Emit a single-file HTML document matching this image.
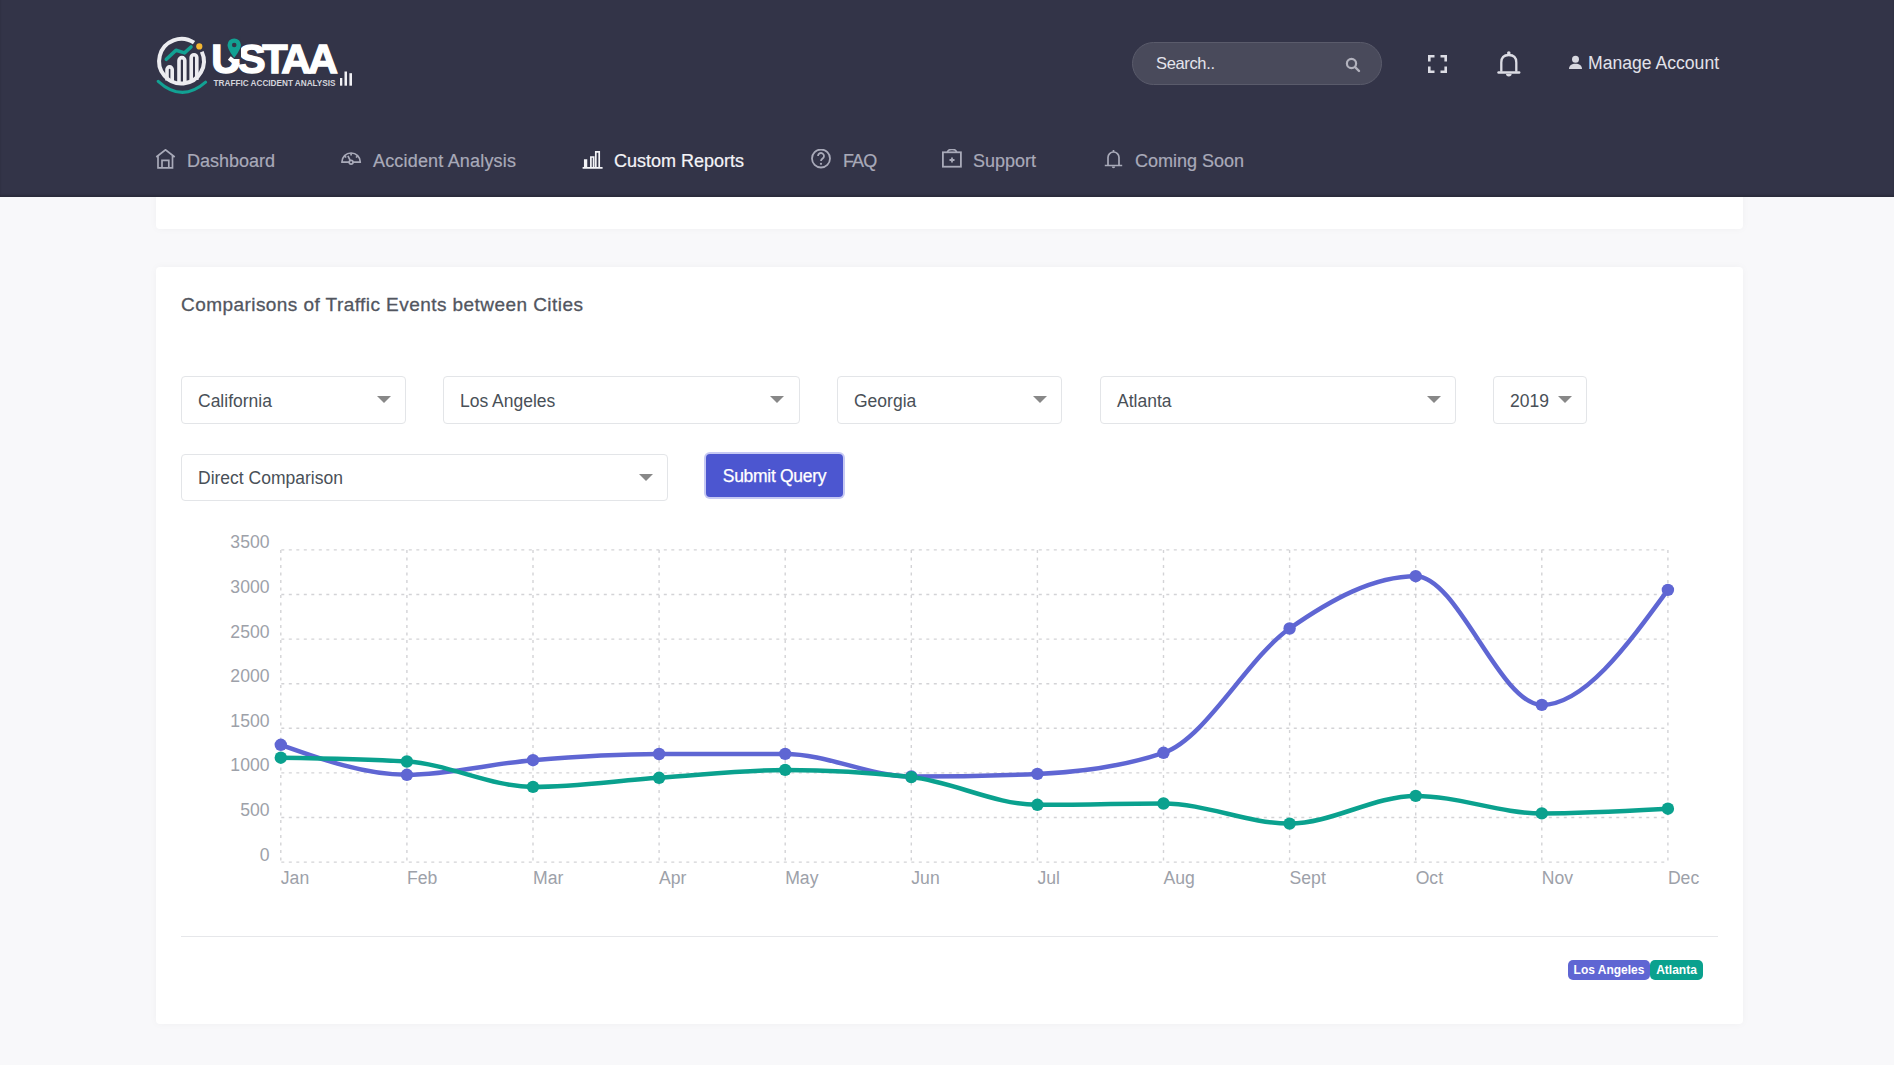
<!DOCTYPE html>
<html><head><meta charset="utf-8">
<style>
*{box-sizing:border-box}
html,body{margin:0;padding:0}
body{width:1894px;height:1065px;overflow:hidden;background:#f8f8fa;font-family:"Liberation Sans",sans-serif;position:relative}
.abs{position:absolute}
#header{position:absolute;left:0;top:0;width:1894px;height:197px;background:#333448;box-shadow:inset 0 -2px 2px rgba(0,0,0,.18);z-index:2}
.search{position:absolute;left:1132px;top:42px;width:250px;height:43px;border-radius:22px;background:#494a5b;border:1px solid #5a5b6b}
.search span{position:absolute;left:23px;top:11px;font-size:16.5px;letter-spacing:-0.35px;color:#e4e4ec;line-height:18px}
.nav{position:absolute;top:149px;height:22px;font-size:18px;line-height:22px;color:#a9aab9;white-space:nowrap}
.nav svg{position:absolute;top:0}
.nav span{position:absolute;top:1px;-webkit-text-stroke:0.2px currentColor}
.card{position:absolute;left:156px;width:1587px;background:#fff;border-radius:4px;box-shadow:0 0 8px rgba(30,30,60,.035)}
.sel{position:absolute;height:48px;border:1px solid #e3e5e8;border-radius:4px;background:#fff}
.sel span{position:absolute;left:16px;top:14px;font-size:17.5px;line-height:20px;color:#495057}
.sel i{position:absolute;top:19px;width:0;height:0;border-left:7px solid transparent;border-right:7px solid transparent;border-top:7px solid #888}
</style></head>
<body>
<div id="header">
  <!-- logo -->
  <svg id="logo" class="abs" style="left:150px;top:30px" width="210" height="70" viewBox="150 30 210 70">
    <path d="M201.80 51.73 A22.4 22.4 0 1 1 194.03 42.63" fill="none" stroke="#ececf0" stroke-width="4"/>
    <circle cx="199.3" cy="46.4" r="3.1" fill="#f5b731"/>
    <path d="M167 80.5 V69.5 a2.6 2.6 0 0 1 5.2 0 V81.5 M179 82 V60.5 a2.9 2.9 0 0 1 5.8 0 V82 M191.2 81.5 V57.5 a2.8 2.8 0 0 1 5.6 0 V80" fill="none" stroke="#ececf0" stroke-width="3.6"/>
    <path d="M166.3 59.3 L176 50.2 L184.5 52.9 L191 47" fill="none" stroke="#12a193" stroke-width="3.6" stroke-linecap="round" stroke-linejoin="round"/>
    <path d="M158.2 81.3 Q182 103 205.6 82.2" fill="none" stroke="#12a193" stroke-width="3" stroke-linecap="round"/>
    <text x="211.3" y="72.6" font-family="Liberation Sans" font-weight="bold" font-size="41.5" fill="#fff" stroke="#fff" stroke-width="1.4" letter-spacing="-3.3">USTAA</text>
    <rect x="229" y="36" width="12" height="23" fill="#323447"/>
    <path d="M229.3 58 L238.5 65.5" stroke="#fff" stroke-width="4.5"/>
    <path d="M234.2 38.4 a6.7 6.7 0 0 1 6.7 6.7 c0 4.6 -6.7 12.8 -6.7 12.8 s-6.7 -8.2 -6.7 -12.8 a6.7 6.7 0 0 1 6.7 -6.7z" fill="#12a193"/>
    <circle cx="234.2" cy="45" r="2.3" fill="#323447"/>
    <text x="213.6" y="85.7" font-family="Liberation Sans" font-weight="bold" font-size="8.2" fill="#d4d4dc">TRAFFIC ACCIDENT ANALYSIS</text>
    <rect x="340" y="78" width="2.3" height="7.7" fill="#f0f0f4"/>
    <rect x="344.5" y="71.5" width="2.5" height="14.2" fill="#f0f0f4"/>
    <rect x="349.4" y="73.2" width="2.6" height="12.5" fill="#f0f0f4"/>
  </svg>
  <div class="search"><span>Search..</span>
    <svg class="abs" style="left:212px;top:14px" width="16" height="16" viewBox="0 0 16 16"><circle cx="6.5" cy="6.5" r="4.6" fill="none" stroke="#b3b3be" stroke-width="2.2"/><path d="M10 10 L14 14" stroke="#b3b3be" stroke-width="2.4" stroke-linecap="round"/></svg>
  </div>
  <!-- fullscreen -->
  <svg class="abs" style="left:1428px;top:55px" width="20" height="18" viewBox="0 0 20 18" fill="none" stroke="#dcdce4" stroke-width="2.6">
    <path d="M1.3 6.5 V1.3 H6.5 M12.5 1.3 H17.7 V6.5 M17.7 11.5 V16.7 H12.5 M6.5 16.7 H1.3 V11.5"/>
  </svg>
  <!-- bell -->
  <svg class="abs" style="left:1496px;top:49px" width="26" height="29" viewBox="1496 49 26 29" fill="none" stroke="#dcdce4" stroke-width="2.3">
    <path d="M1501.3 71.8 V62.5 C1501.3 57.5 1504.3 55 1508.8 55 C1513.3 55 1516.3 57.5 1516.3 62.5 V71.8" stroke-linejoin="round"/>
    <path d="M1498.5 72.5 H1519.2" stroke-width="2.4" stroke-linecap="round"/>
    <circle cx="1508.8" cy="53" r="1.8" fill="#dcdce4" stroke="none"/>
    <path d="M1506 74 H1511.6 a2.8 2.5 0 0 1 -5.6 0z" fill="#dcdce4" stroke="none"/>
  </svg>
  <!-- person -->
  <svg class="abs" style="left:1568px;top:55px" width="15" height="15" viewBox="0 0 15 15" fill="#d8d8e0">
    <circle cx="7.5" cy="4.3" r="3.5"/><path d="M1 14 c0 -3.5 2.8 -5.2 6.5 -5.2 s6.5 1.7 6.5 5.2z"/>
  </svg>
  <div class="abs" style="left:1588px;top:52px;font-size:17.6px;line-height:22px;color:#e2e2ea;white-space:nowrap">Manage Account</div>

  <!-- nav -->
  <div class="nav" style="left:155px">
    <svg width="22" height="22" viewBox="0 0 22 22" fill="none" stroke="#a9aab9" stroke-width="1.7"><path d="M1.3 8 L10.5 0.8 L19.7 8 M3 7 V18.8 H17.5 V7 M7 18.8 V11.3 H13.8 V18.8"/></svg>
    <span style="left:32px">Dashboard</span>
  </div>
  <div class="nav" style="left:340px">
    <svg width="24" height="22" viewBox="0 0 24 22" fill="none" stroke="#a9aab9" stroke-width="1.7"><path d="M1.9 13.2 A9.2 9.2 0 0 1 20.3 13.2 Z" stroke-linejoin="round"/><path d="M10.3 11.6 L7.9 6.9 M11.1 4.2 V6.4 M4.7 7.1 l1.5 1.4 M17.5 7.1 l-1.5 1.4"/><circle cx="11.1" cy="13.2" r="1.9" fill="#333448"/></svg>
    <span style="left:33px;letter-spacing:0.18px">Accident Analysis</span>
  </div>
  <div class="nav" style="left:582px;color:#f4f4f8">
    <svg width="22" height="22" viewBox="0 0 22 22" fill="none" stroke="#f4f4f8" stroke-width="1.7"><path d="M2.8 18 V11 H4.4 V18 M8.9 18 V8 H11.6 V18 M13.8 18 V2.9 H17.2 V18 M0.6 18.9 H20.6"/></svg>
    <span style="left:32px">Custom Reports</span>
  </div>
  <div class="nav" style="left:810px">
    <svg width="22" height="22" viewBox="0 0 22 22" fill="none" stroke="#a9aab9" stroke-width="1.8"><circle cx="11" cy="9.5" r="9"/><path d="M8 7 a3 3 0 1 1 4.5 2.6 c-1 .6 -1.5 1.2 -1.5 2.4"/><circle cx="11" cy="14.8" r="1.1" fill="#a9aab9" stroke="none"/></svg>
    <span style="left:33px;letter-spacing:-0.9px">FAQ</span>
  </div>
  <div class="nav" style="left:941px">
    <svg width="22" height="22" viewBox="0 0 22 22" fill="none" stroke="#a9aab9" stroke-width="1.8"><rect x="1.9" y="3.3" width="18" height="14.4"/><path d="M6.5 3.3 a4.5 3 0 0 1 9 0"/><path d="M11 8.5 V13.5 M8.5 11 H13.5" stroke-width="1.8"/></svg>
    <span style="left:32px">Support</span>
  </div>
  <div class="nav" style="left:1103px">
    <svg width="22" height="22" viewBox="0 0 22 22" fill="none" stroke="#a9aab9" stroke-width="1.7"><path d="M5 16.5 V8.5 a5.5 5.5 0 0 1 11 0 V16.5 M1.8 16.5 H19.2"/><path d="M10.5 1 V3" /><path d="M8.8 17.5 a1.7 1.7 0 0 0 3.4 0" fill="#a9aab9" stroke="none"/></svg>
    <span style="left:32px">Coming Soon</span>
  </div>
</div>

<div class="card" style="top:0;height:229px;border-radius:0 0 4px 4px"></div>
<div class="card" id="main" style="top:267px;height:757px"></div>
<div id="title" class="abs" style="left:181px;top:294px;font-size:19px;line-height:22px;letter-spacing:0.44px;-webkit-text-stroke:0.3px #52565f;color:#52565f;white-space:nowrap">Comparisons of Traffic Events between Cities</div>
<div class="sel" style="left:181px;top:376px;width:225px"><span>California</span><i style="left:195px"></i></div>
<div class="sel" style="left:443px;top:376px;width:357px"><span>Los Angeles</span><i style="left:326px"></i></div>
<div class="sel" style="left:837px;top:376px;width:225px"><span>Georgia</span><i style="left:195px"></i></div>
<div class="sel" style="left:1100px;top:376px;width:356px"><span>Atlanta</span><i style="left:326px"></i></div>
<div class="sel" style="left:1493px;top:376px;width:94px"><span>2019</span><i style="left:64px"></i></div>
<div class="sel" style="left:181px;top:454px;width:487px;height:47px"><span style="top:13px">Direct Comparison</span><i style="left:457px;top:19px"></i></div>
<div id="btn" class="abs" style="left:706px;top:454px;width:137px;height:43px;background:#4c56d0;border-radius:4px;box-shadow:0 0 0 2px #c6c9f3;color:#fff;font-size:17.5px;letter-spacing:-0.3px;line-height:20px;padding-top:12px;text-align:center;-webkit-text-stroke:0.25px #fff">Submit Query</div>
<svg id="chart" class="abs" style="left:0;top:0" width="1894" height="1065" viewBox="0 0 1894 1065">
<g stroke="#d3d3d6" stroke-width="1.4" stroke-dasharray="3 4.5" fill="none"><line x1="280.8" y1="549.9" x2="1667.9" y2="549.9" stroke-dashoffset="7.0"/><line x1="280.8" y1="594.5" x2="1667.9" y2="594.5" stroke-dashoffset="7.0"/><line x1="280.8" y1="639.1" x2="1667.9" y2="639.1" stroke-dashoffset="7.0"/><line x1="280.8" y1="683.7" x2="1667.9" y2="683.7" stroke-dashoffset="7.0"/><line x1="280.8" y1="728.3" x2="1667.9" y2="728.3" stroke-dashoffset="7.0"/><line x1="280.8" y1="772.9" x2="1667.9" y2="772.9" stroke-dashoffset="7.0"/><line x1="280.8" y1="817.5" x2="1667.9" y2="817.5" stroke-dashoffset="7.0"/><line x1="280.8" y1="862.1" x2="1667.9" y2="862.1" stroke-dashoffset="7.0"/><line x1="280.8" y1="549.9" x2="280.8" y2="862.1" stroke-dashoffset="7.3"/><line x1="406.9" y1="549.9" x2="406.9" y2="862.1" stroke-dashoffset="7.3"/><line x1="533.0" y1="549.9" x2="533.0" y2="862.1" stroke-dashoffset="7.3"/><line x1="659.1" y1="549.9" x2="659.1" y2="862.1" stroke-dashoffset="7.3"/><line x1="785.2" y1="549.9" x2="785.2" y2="862.1" stroke-dashoffset="7.3"/><line x1="911.3" y1="549.9" x2="911.3" y2="862.1" stroke-dashoffset="7.3"/><line x1="1037.4" y1="549.9" x2="1037.4" y2="862.1" stroke-dashoffset="7.3"/><line x1="1163.5" y1="549.9" x2="1163.5" y2="862.1" stroke-dashoffset="7.3"/><line x1="1289.6" y1="549.9" x2="1289.6" y2="862.1" stroke-dashoffset="7.3"/><line x1="1415.7" y1="549.9" x2="1415.7" y2="862.1" stroke-dashoffset="7.3"/><line x1="1541.8" y1="549.9" x2="1541.8" y2="862.1" stroke-dashoffset="7.3"/><line x1="1667.9" y1="549.9" x2="1667.9" y2="862.1" stroke-dashoffset="7.3"/></g>
<g font-family="Liberation Sans" font-size="17.6" fill="#9da1a9"><text x="269.5" y="548.4" text-anchor="end">3500</text><text x="269.5" y="593.0" text-anchor="end">3000</text><text x="269.5" y="637.6" text-anchor="end">2500</text><text x="269.5" y="682.2" text-anchor="end">2000</text><text x="269.5" y="726.8" text-anchor="end">1500</text><text x="269.5" y="771.4" text-anchor="end">1000</text><text x="269.5" y="816.0" text-anchor="end">500</text><text x="269.5" y="860.6" text-anchor="end">0</text><text x="280.8" y="883.5">Jan</text><text x="406.9" y="883.5">Feb</text><text x="533.0" y="883.5">Mar</text><text x="659.1" y="883.5">Apr</text><text x="785.2" y="883.5">May</text><text x="911.3" y="883.5">Jun</text><text x="1037.4" y="883.5">Jul</text><text x="1163.5" y="883.5">Aug</text><text x="1289.6" y="883.5">Sept</text><text x="1415.7" y="883.5">Oct</text><text x="1541.8" y="883.5">Nov</text><text x="1667.9" y="883.5">Dec</text></g>
<path d="M280.8 744.8 C322.8 759.8 364.9 774.8 406.9 774.8 C448.9 774.8 491.0 763.7 533.0 760.2 C575.0 756.7 617.1 754.1 659.1 754.0 C701.1 753.9 743.2 753.9 785.2 753.9 C827.2 753.9 869.3 776.5 911.3 776.5 C953.3 776.5 995.4 775.6 1037.4 773.9 C1079.4 772.2 1121.5 766.9 1163.5 752.8 C1205.5 738.7 1247.6 657.9 1289.6 628.5 C1331.6 599.1 1373.7 576.2 1415.7 576.2 C1457.7 576.2 1499.8 704.9 1541.8 704.9 C1583.8 704.9 1625.9 647.4 1667.9 589.9" fill="none" stroke="#5f66d3" stroke-width="4.5" stroke-linecap="round"/>
<path d="M280.8 757.7 C322.8 758.3 364.9 759.0 406.9 761.5 C448.9 764.0 491.0 786.9 533.0 786.9 C575.0 786.9 617.1 780.6 659.1 777.8 C701.1 775.0 743.2 769.9 785.2 769.9 C827.2 769.9 869.3 772.3 911.3 777.1 C953.3 781.9 995.4 804.8 1037.4 804.8 C1079.4 804.8 1121.5 803.5 1163.5 803.5 C1205.5 803.5 1247.6 823.6 1289.6 823.6 C1331.6 823.6 1373.7 795.9 1415.7 795.9 C1457.7 795.9 1499.8 813.4 1541.8 813.4 C1583.8 813.4 1625.9 811.0 1667.9 808.7" fill="none" stroke="#0aa18e" stroke-width="4.5" stroke-linecap="round"/>
<g fill="#5f66d3"><circle cx="280.8" cy="744.8" r="6.2"/><circle cx="406.9" cy="774.8" r="6.2"/><circle cx="533.0" cy="760.2" r="6.2"/><circle cx="659.1" cy="754.0" r="6.2"/><circle cx="785.2" cy="753.9" r="6.2"/><circle cx="911.3" cy="776.5" r="6.2"/><circle cx="1037.4" cy="773.9" r="6.2"/><circle cx="1163.5" cy="752.8" r="6.2"/><circle cx="1289.6" cy="628.5" r="6.2"/><circle cx="1415.7" cy="576.2" r="6.2"/><circle cx="1541.8" cy="704.9" r="6.2"/><circle cx="1667.9" cy="589.9" r="6.2"/></g>
<g fill="#0aa18e"><circle cx="280.8" cy="757.7" r="6.2"/><circle cx="406.9" cy="761.5" r="6.2"/><circle cx="533.0" cy="786.9" r="6.2"/><circle cx="659.1" cy="777.8" r="6.2"/><circle cx="785.2" cy="769.9" r="6.2"/><circle cx="911.3" cy="777.1" r="6.2"/><circle cx="1037.4" cy="804.8" r="6.2"/><circle cx="1163.5" cy="803.5" r="6.2"/><circle cx="1289.6" cy="823.6" r="6.2"/><circle cx="1415.7" cy="795.9" r="6.2"/><circle cx="1541.8" cy="813.4" r="6.2"/><circle cx="1667.9" cy="808.7" r="6.2"/></g>
</svg>
<div class="abs" style="left:181px;top:936px;width:1537px;height:1px;background:#e6e7ea"></div>
<div class="abs" style="left:1568px;top:960px;width:82px;height:20px;background:#5f66d3;border-radius:5px;color:#fff;font-weight:bold;font-size:12px;line-height:20px;text-align:center">Los Angeles</div>
<div class="abs" style="left:1650px;top:960px;width:53px;height:20px;background:#0aa18e;border-radius:5px;color:#fff;font-weight:bold;font-size:12px;line-height:20px;text-align:center">Atlanta</div>

</body></html>
